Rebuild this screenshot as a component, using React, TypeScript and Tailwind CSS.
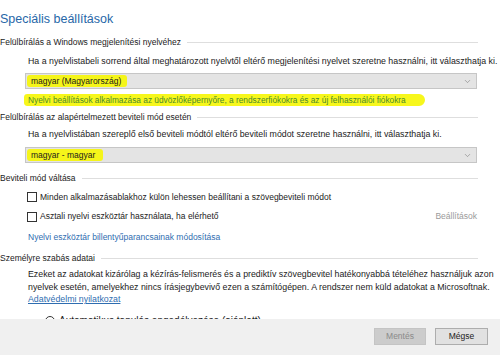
import { ChevronDown } from "lucide-react"

function SectionHeader({ title }: { title: string }) {
  return (
    <div className="flex items-center gap-1.5 h-[14px]">
      <span className="whitespace-nowrap">{title}</span>
      <div className="flex-1 h-px bg-[#dedede] mr-[22px]" />
    </div>
  )
}

function Dropdown({ value, highlight }: { value: string; highlight: string }) {
  return (
    <div className="ml-[25px] mr-[23px] h-[16px] flex items-center justify-between border border-[#c6c6c6] bg-[#e4e4e4] pl-[1px] pr-[4px]">
      <span className={`bg-[#f5f51a] rounded-[3px] pl-[4px] leading-[12px] ${highlight}`}>{value}</span>
      <ChevronDown size={9} strokeWidth={1.5} className="text-[#777]" />
    </div>
  )
}

function Checkbox({ label }: { label: string }) {
  return (
    <div className="flex items-center gap-[3px] h-[12px]">
      <div className="w-[10px] h-[10px] border border-[#333] bg-white" />
      <span>{label}</span>
    </div>
  )
}

export default function App() {
  return (
    <div
      className="w-[500px] h-[355px] bg-white overflow-hidden flex flex-col text-[8.5px] text-[#1b1b1b]"
      style={{ fontFamily: '"Liberation Sans", Arial, sans-serif' }}
    >
      <div className="flex-1 overflow-hidden flex flex-col pt-[11px]">
        <h1 className="text-[12.5px] leading-[16px] text-[#2767a8] font-normal">Speciális beállítások</h1>

        <div className="mt-[8px]">
          <SectionHeader title="Felülbírálás a Windows megjelenítési nyelvéhez" />
        </div>
        <p className="ml-[28px] mt-[6px] leading-[12px] text-[8.8px]">
          Ha a nyelvlistabeli sorrend által meghatározott nyelvtől eltérő megjelenítési nyelvet szeretne használni, itt választhatja ki.
        </p>
        <div className="mt-[6px]">
          <Dropdown value="magyar (Magyarország)" highlight="pr-[6px]" />
        </div>
        <div className="ml-[24px] mt-[5px] w-[401px] h-[17px] flex items-center bg-[#f7f71c] rounded-l-[8px] rounded-r-[14px] pl-[4px]">
          <span className="text-[#4a8a2c] text-[8.3px] whitespace-nowrap">
            Nyelvi beállítások alkalmazása az üdvözlőképernyőre, a rendszerfiókokra és az új felhasználói fiókokra
          </span>
        </div>

        <div className="mt-[4px]">
          <SectionHeader title="Felülbírálás az alapértelmezett beviteli mód esetén" />
        </div>
        <p className="ml-[28px] mt-[4px] leading-[12px] text-[8.8px]">
          Ha a nyelvlistában szereplő első beviteli módtól eltérő beviteli módot szeretne használni, itt választhatja ki.
        </p>
        <div className="mt-[7px]">
          <Dropdown value="magyar - magyar" highlight="pr-[8px]" />
        </div>

        <div className="mt-[8px]">
          <SectionHeader title="Beviteli mód váltása" />
        </div>
        <div className="ml-[27px] mt-[6px]">
          <Checkbox label="Minden alkalmazásablakhoz külön lehessen beállítani a szövegbeviteli módot" />
        </div>
        <div className="ml-[27px] mr-[23px] mt-[7px] flex items-center justify-between">
          <Checkbox label="Asztali nyelvi eszköztár használata, ha elérhető" />
          <span className="text-[#9a9a9a]">Beállítások</span>
        </div>
        <div className="ml-[28px] mt-[8px] leading-[12px] text-[#2f6db0]">
          Nyelvi eszköztár billentyűparancsainak módosítása
        </div>

        <div className="mt-[8px]">
          <SectionHeader title="Személyre szabás adatai" />
        </div>
        <p className="ml-[28px] mt-[3px] leading-[12.5px] text-[8.8px] whitespace-nowrap">
          Ezeket az adatokat kizárólag a kézírás-felismerés és a prediktív szövegbevitel hatékonyabbá tételéhez használjuk azon
          <br />
          nyelvek esetén, amelyekhez nincs írásjegybevivő ezen a számítógépen. A rendszer nem küld adatokat a Microsoftnak.
        </p>
        <a className="ml-[28px] leading-[12px] text-[#2f6db0] underline w-fit text-[8.8px]">Adatvédelmi nyilatkozat</a>
        <div className="ml-[45px] mt-[8px] flex items-center gap-[4px] h-[15px] shrink-0">
          <div className="w-[10px] h-[10px] rounded-full border border-[#333]" />
          <span className="text-[10px]">Automatikus tanulás engedélyezése (ajánlott)</span>
        </div>
      </div>

      <div className="h-[36px] shrink-0 bg-[#f0f0f0] flex items-center justify-end gap-[9px] pr-[12px] pb-[1px]">
        <button className="w-[52px] h-[17px] bg-[#cccccc] border border-[#c4c4c4] text-[#8a8a8a] text-[8.5px]">
          Mentés
        </button>
        <button className="w-[53px] h-[17px] bg-[#e1e1e1] border border-[#adadad] text-[#1b1b1b] text-[8.5px]">
          Mégse
        </button>
      </div>
    </div>
  )
}
